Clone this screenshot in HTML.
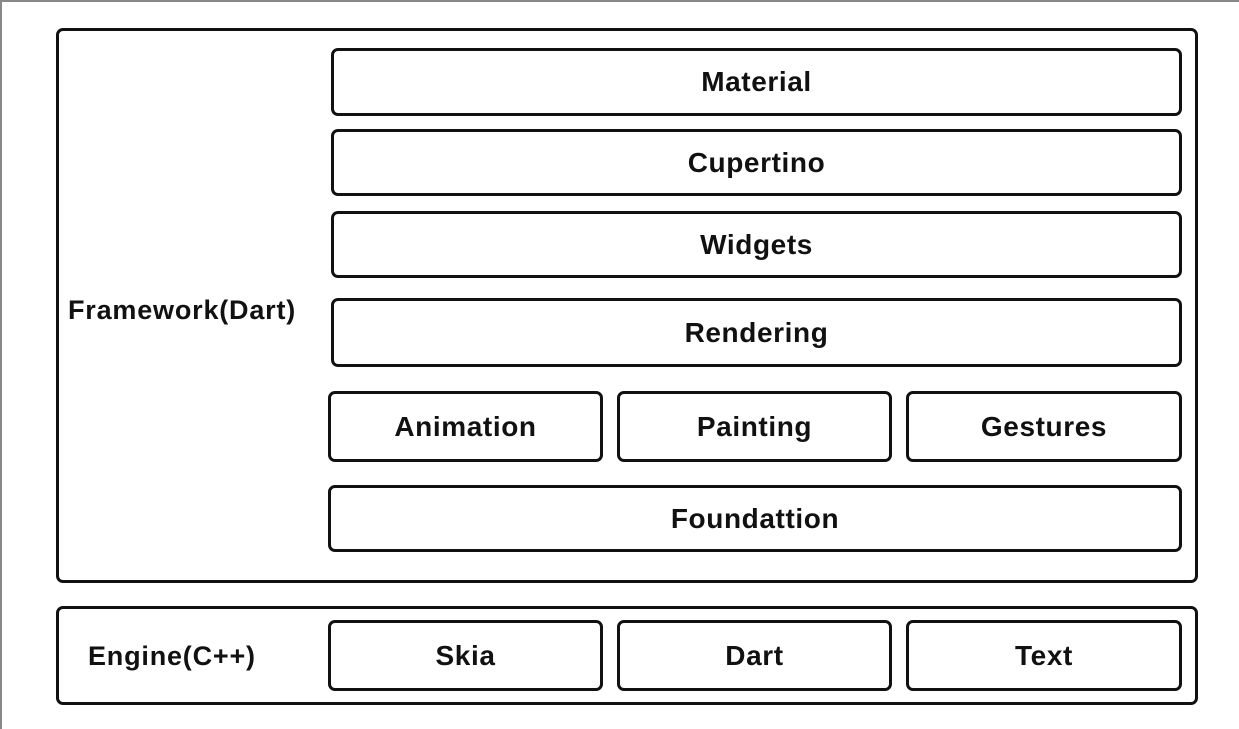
<!DOCTYPE html>
<html><head><meta charset="utf-8"><style>
html,body{margin:0;padding:0;background:#fff;}
body{width:1239px;height:729px;position:relative;overflow:hidden;font-family:"Liberation Sans","DejaVu Sans",sans-serif;font-weight:bold;color:#111;}
.edge-l{position:absolute;left:0;top:0;width:2px;height:729px;background:#888;}
.edge-t{position:absolute;left:0;top:0;width:1239px;height:2px;background:#888;}
.b{position:absolute;box-sizing:border-box;border:3px solid #111;border-radius:7px;display:flex;align-items:center;justify-content:center;font-size:28px;letter-spacing:0.6px;}
.lbl{position:absolute;font-size:27px;letter-spacing:0.8px;}
</style></head><body>
<div class="edge-l"></div><div class="edge-t"></div>
<div class="b" style="left:56px;top:28px;width:1142px;height:555px;"></div>
<div class="lbl" style="left:68px;top:295px;">Framework(Dart)</div>
<div class="b" style="left:331px;top:48px;width:851px;height:68px;">Material</div>
<div class="b" style="left:331px;top:129px;width:851px;height:67px;">Cupertino</div>
<div class="b" style="left:331px;top:211px;width:851px;height:67px;">Widgets</div>
<div class="b" style="left:331px;top:298px;width:851px;height:69px;">Rendering</div>
<div class="b" style="left:328px;top:391px;width:275px;height:71px;">Animation</div>
<div class="b" style="left:617px;top:391px;width:275px;height:71px;">Painting</div>
<div class="b" style="left:906px;top:391px;width:276px;height:71px;">Gestures</div>
<div class="b" style="left:328px;top:485px;width:854px;height:67px;">Foundattion</div>
<div class="b" style="left:56px;top:606px;width:1142px;height:99px;"></div>
<div class="lbl" style="left:88px;top:641px;">Engine(C++)</div>
<div class="b" style="left:328px;top:620px;width:275px;height:71px;">Skia</div>
<div class="b" style="left:617px;top:620px;width:275px;height:71px;">Dart</div>
<div class="b" style="left:906px;top:620px;width:276px;height:71px;">Text</div>
</body></html>
